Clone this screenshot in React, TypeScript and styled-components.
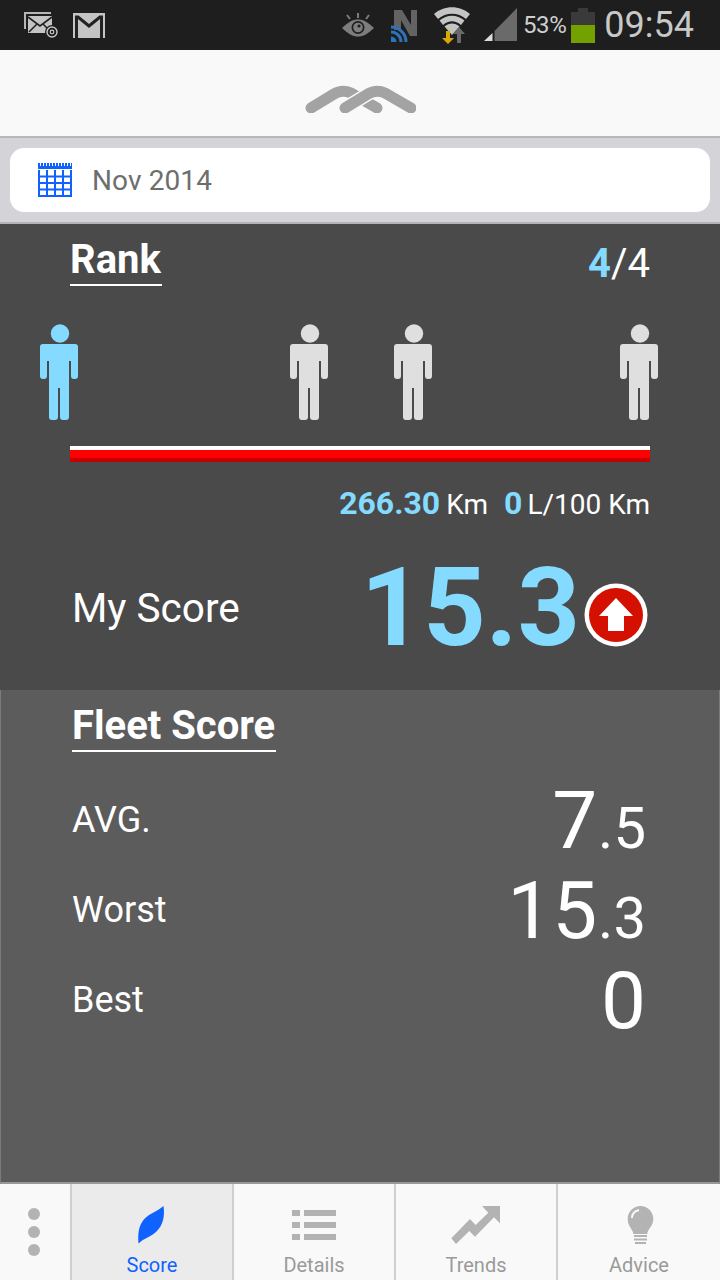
import React from "react";
import styled, { createGlobalStyle } from "styled-components";

const GlobalStyle = createGlobalStyle`
  html, body {
    margin: 0;
    padding: 0;
    background: #4a4a4a;
  }
  * {
    box-sizing: border-box;
  }
`;

const Screen = styled.div`
  width: 720px;
  height: 1280px;
  display: flex;
  flex-direction: column;
  overflow: hidden;
  font-family: Roboto, "Liberation Sans", sans-serif;
`;

const StatusBar = styled.div`
  height: 50px;
  flex: none;
  background: #1e1e1e;
  display: flex;
  align-items: center;
  padding: 0 26px 0 24px;
`;

const StatusLeft = styled.div`
  display: flex;
  align-items: center;
  gap: 13px;
  flex: 1;
`;

const StatusRight = styled.div`
  display: flex;
  align-items: center;
`;

const StatusGlyph = styled.svg<{ $gap?: number }>`
  flex: none;
  margin-right: ${(p) => p.$gap || 0}px;
`;

const BatteryText = styled.span`
  color: #cfcfcf;
  font-size: 24px;
  letter-spacing: -0.4px;
  margin: 0 5px 0 5px;
`;

const Clock = styled.span`
  color: #c8c8c8;
  font-size: 36px;
  margin-left: 9px;
  line-height: 50px;
`;

const Header = styled.div`
  height: 88px;
  flex: none;
  background: #f9f9f9;
  border-bottom: 2px solid #b8b8b8;
  display: flex;
  align-items: center;
  justify-content: center;
`;

const DateStrip = styled.div`
  height: 86px;
  flex: none;
  background: #d3d3d8;
  border-bottom: 2px solid #b5b5b8;
  padding: 10px 10px 0;
`;

const DateCard = styled.div`
  height: 64px;
  background: #fff;
  border-radius: 14px;
  display: flex;
  align-items: center;
  padding-left: 28px;
  gap: 20px;
  color: #6e6e6e;
  font-size: 28px;
  letter-spacing: 0.1px;
`;

const RankPanel = styled.section`
  height: 466px;
  flex: none;
  background: #4a4a4a;
  color: #fff;
  padding: 12px 70px 0;
`;

const TitleRow = styled.div`
  display: flex;
  justify-content: space-between;
  align-items: flex-start;
`;

const Title = styled.h2`
  margin: 0;
  font-size: 40px;
  font-weight: 700;
  line-height: 48px;
  border-bottom: 2px solid #fff;
  height: 50px;
  padding-right: 1px;
`;

const FleetTitle = styled(Title)`
  display: inline-block;
`;

const RankCount = styled.div`
  font-size: 40px;
  line-height: 56px;
`;

const Blue = styled.b`
  color: #84dbff;
  font-weight: 700;
`;

const People = styled.div`
  display: flex;
  margin: 32px -70px 0;
  height: 96px;
`;

const Person = styled.svg<{ $left: number }>`
  width: 38px;
  height: 96px;
  flex: none;
  margin-left: ${(p) => p.$left}px;
`;

const Track = styled.div`
  height: 16px;
  margin-top: 26px;
  background: linear-gradient(#fff 0 4px, #ff0000 4px 12px, #c40000 12px 16px);
`;

const Stats = styled.div`
  display: flex;
  justify-content: flex-end;
  align-items: baseline;
  margin-top: 21px;
  font-size: 28px;
  line-height: 40px;
`;

const StatValue = styled.b<{ $left?: number; $right?: number }>`
  color: #84dbff;
  font-size: 32px;
  font-weight: 700;
  margin: 0 ${(p) => p.$right ?? 6}px 0 ${(p) => p.$left || 0}px;
`;

const ScoreRow = styled.div`
  display: flex;
  align-items: center;
  justify-content: space-between;
  margin: 27px 2px 0 2px;
  height: 112px;
`;

const ScoreLabel = styled.div`
  font-size: 40.5px;
`;

const ScoreValue = styled.div`
  display: flex;
  align-items: center;
  gap: 4px;
`;

const ScoreNumber = styled.span`
  color: #84dbff;
  font-size: 109px;
  font-weight: 700;
  line-height: 112px;
`;

const BadgeIcon = styled.svg`
  flex: none;
  margin-top: 14px;
`;

const FleetPanel = styled.section`
  flex: 1;
  background: #5c5c5c;
  color: #fff;
  border-left: 1px solid #7c7c7c;
  border-right: 1px solid #7c7c7c;
  border-bottom: 2px solid #999;
  padding: 12px 73px 0 71px;
`;

const FleetRows = styled.div`
  margin-top: 24px;
`;

const FleetRow = styled.div`
  display: flex;
  align-items: flex-end;
  justify-content: space-between;
  height: 90px;
`;

const FleetLabel = styled.div`
  font-size: 36px;
  line-height: 40px;
  padding-bottom: 26px;
`;

const FleetValue = styled.div`
  font-size: 80px;
  line-height: 90px;
`;

const Decimal = styled.span`
  font-size: 58px;
  line-height: 0;
  margin-left: 1px;
`;

const Nav = styled.nav`
  height: 96px;
  flex: none;
  display: flex;
  background: #f9f9f9;
`;

const MenuCell = styled.div`
  width: 72px;
  flex: none;
  border-right: 2px solid #cfcfcf;
  display: flex;
  flex-direction: column;
  align-items: center;
  justify-content: center;
  gap: 6px;
  padding-right: 2px;
`;

const Dot = styled.span`
  width: 12px;
  height: 12px;
  border-radius: 50%;
  background: #b3b3b3;
`;

const Tab = styled.div<{ $active?: boolean; $last?: boolean }>`
  width: 162px;
  flex: none;
  border-right: ${(p) => (p.$last ? "none" : "2px solid #cfcfcf")};
  background: ${(p) => (p.$active ? "#ebebeb" : "transparent")};
  color: ${(p) => (p.$active ? "#0f62fe" : "#9a9a9a")};
  display: flex;
  flex-direction: column;
  align-items: center;
  font-size: 20px;
  line-height: 24px;
  padding-top: 20px;
  gap: 9px;
`;

const TabIcon = styled.svg`
  width: 60px;
  height: 40px;
  flex: none;
`;

const PersonFigure = ({ color, left }: { color: string; left: number }) => (
  <Person $left={left} viewBox="0 0 38 96">
    <circle cx="20" cy="9.500" r="9.200" fill={color} />
    <path
      fill={color}
      d="M3 20h32a3 3 0 0 1 3 3v29a3 3 0 0 1-3 3h-1a3 3 0 0 1-3-3V37h-2v56a3 3 0 0 1-3 3h-3a3 3 0 0 1-3-3V64h-2v29a3 3 0 0 1-3 3h-3a3 3 0 0 1-3-3V37H7v15a3 3 0 0 1-3 3H3a3 3 0 0 1-3-3V23a3 3 0 0 1 3-3z"
    />
  </Person>
);

const MailIcon = () => (
  <StatusGlyph width="36" height="28" viewBox="0 0 36 28">
    <path d="M0 1h27v2H2v15H0z" fill="#b5b5b5" />
    <rect x="4" y="5" width="24" height="17" fill="#c4c4c4" />
    <path d="M4 6l12 9 12-9M5 21l8-8M27 21l-8-8" fill="none" stroke="#222" strokeWidth="1.600" />
    <circle cx="28" cy="21" r="7" fill="#1e1e1e" />
    <circle cx="28" cy="21" r="5" fill="none" stroke="#c8c8c8" strokeWidth="1.400" />
    <circle cx="28" cy="21" r="1.800" fill="none" stroke="#c8c8c8" strokeWidth="1.200" />
  </StatusGlyph>
);

const GmailIcon = () => (
  <StatusGlyph width="32" height="25" viewBox="0 0 32 25">
    <rect width="32" height="25" fill="#c4c4c4" />
    <path d="M3.500 25V4h1.500L16 13 27 4h1.500v21" fill="none" stroke="#222" strokeWidth="3" />
  </StatusGlyph>
);

const EyeIcon = () => (
  <StatusGlyph $gap={15} width="34" height="30" viewBox="0 0 34 30">
    <path d="M1 18C7 12 12 9.500 17 9.500S27 12 33 18c-6 6-11 8.500-16 8.500S7 24 1 18z" fill="#7d7d7d" />
    <circle cx="17" cy="17.500" r="6.500" fill="#1e1e1e" />
    <circle cx="17" cy="17.500" r="4.800" fill="#7d7d7d" />
    <circle cx="18" cy="16" r="1.600" fill="#1e1e1e" />
    <path d="M17 3v5M6 5l3 4M28 5l-3 4" stroke="#7d7d7d" strokeWidth="2" />
  </StatusGlyph>
);

const NewsIcon = () => (
  <StatusGlyph $gap={14} width="30" height="38" viewBox="0 0 30 38">
    <path d="M4 4h8l9 15V4h6v26h-7L11 14v10H4z" fill="#636363" />
    <path d="M1 21a15 15 0 0 1 15 15M1 26a10 10 0 0 1 10 10" fill="none" stroke="#2d73ba" strokeWidth="3" />
    <path d="M1 30.500a5.500 5.500 0 0 1 5.500 5.500H1z" fill="#2d73ba" />
  </StatusGlyph>
);

const WifiIcon = () => (
  <StatusGlyph $gap={14} width="36" height="38" viewBox="0 0 36 38">
    <path d="M0 8C10-1 26-1 36 8L32 13C24 6 12 6 4 13z" fill="#c4c4c4" />
    <path d="M5.500 14.500C13 8 23 8 30.500 14.500L27 19C21 14 15 14 9 19z" fill="#c4c4c4" />
    <path d="M10.500 20.500C15 16.500 21 16.500 25.500 20.500L18 29z" fill="#c4c4c4" />
    <path d="M12 25h4v7h4l-6 6-6-6h4z" fill="#d8a700" />
    <path d="M25 21l6 7h-4v9h-4v-9h-4z" fill="#6a6a6a" />
  </StatusGlyph>
);

const SignalIcon = () => (
  <StatusGlyph width="34" height="34" viewBox="0 0 34 34">
    <path d="M8.500 25v8H0z" fill="#dcdcdc" />
    <path d="M33 0v33H10.500V23z" fill="#6a6a6a" />
  </StatusGlyph>
);

const BatteryIcon = () => (
  <StatusGlyph width="24" height="35" viewBox="0 0 24 35">
    <rect x="7" y="0" width="10" height="4" fill="#3a3a3a" />
    <rect x="0" y="4" width="24" height="13" fill="#3a3a3a" />
    <rect x="0" y="17" width="24" height="18" fill="#72a100" />
  </StatusGlyph>
);

const Logo = () => (
  <svg width="112" height="40" viewBox="0 0 112 40" fill="none" stroke="#a3a3a3" strokeWidth="11" strokeLinecap="round" strokeLinejoin="round">
    <path d="M7 35L30 21Q38 16 47 20L73 35" />
    <path d="M41 35L64 21Q72 16 81 20L107 35" stroke="#f9f9f9" strokeWidth="14" strokeLinecap="butt" />
    <path d="M41 35L64 21Q72 16 81 20L107 35" />
  </svg>
);

const CalendarIcon = () => (
  <svg width="34" height="34" viewBox="0 0 34 34" style={{ flex: "none" }}>
    <path d="M0 1.500h34" stroke="#0f62fe" strokeWidth="3" strokeDasharray="2 1" />
    <rect x="0" y="3" width="34" height="3" fill="#0f62fe" />
    <path d="M1 7v26h32V7M1 13.500h32M1 20h32M1 26.500h32M9 7v26M17 7v26M25 7v26" fill="none" stroke="#0f62fe" strokeWidth="2" />
  </svg>
);

const ArrowBadge = () => (
  <BadgeIcon width="64" height="64" viewBox="0 0 64 64">
    <circle cx="32" cy="32" r="31.500" fill="#fff" />
    <circle cx="32" cy="32" r="27" fill="#d41000" />
    <path d="M32 15l17 18H40v15H24V33H15z" fill="#fff" />
  </BadgeIcon>
);

const App = () => {
  return (
    <Screen>
      <GlobalStyle />
      <StatusBar>
        <StatusLeft>
          <MailIcon />
          <GmailIcon />
        </StatusLeft>
        <StatusRight>
          <EyeIcon />
          <NewsIcon />
          <WifiIcon />
          <SignalIcon />
          <BatteryText>53%</BatteryText>
          <BatteryIcon />
          <Clock>09:54</Clock>
        </StatusRight>
      </StatusBar>
      <Header>
        <Logo />
      </Header>
      <DateStrip>
        <DateCard>
          <CalendarIcon />
          Nov 2014
        </DateCard>
      </DateStrip>
      <RankPanel>
        <TitleRow>
          <Title>Rank</Title>
          <RankCount>
            <Blue>4</Blue>/4
          </RankCount>
        </TitleRow>
        <People>
          <PersonFigure color="#84dbff" left={40} />
          <PersonFigure color="#dfdfdf" left={212} />
          <PersonFigure color="#dfdfdf" left={66} />
          <PersonFigure color="#dfdfdf" left={188} />
        </People>
        <Track />
        <Stats>
          <StatValue>266.30</StatValue>
          Km
          <StatValue $left={16} $right={5}>0</StatValue>
          L/100 Km
        </Stats>
        <ScoreRow>
          <ScoreLabel>My Score</ScoreLabel>
          <ScoreValue>
            <ScoreNumber>15.3</ScoreNumber>
            <ArrowBadge />
          </ScoreValue>
        </ScoreRow>
      </RankPanel>
      <FleetPanel>
        <FleetTitle>Fleet Score</FleetTitle>
        <FleetRows>
          <FleetRow>
            <FleetLabel>AVG.</FleetLabel>
            <FleetValue>
              7<Decimal>.5</Decimal>
            </FleetValue>
          </FleetRow>
          <FleetRow>
            <FleetLabel>Worst</FleetLabel>
            <FleetValue>
              15<Decimal>.3</Decimal>
            </FleetValue>
          </FleetRow>
          <FleetRow>
            <FleetLabel>Best</FleetLabel>
            <FleetValue>0</FleetValue>
          </FleetRow>
        </FleetRows>
      </FleetPanel>
      <Nav>
        <MenuCell>
          <Dot />
          <Dot />
          <Dot />
        </MenuCell>
        <Tab $active>
          <TabIcon viewBox="0 0 60 40">
            <path d="M41.500 2C35 8 24 10 19.500 19C16 25 16 33 16.500 39.500C22 34 29 33 35 27C41 21 43 12 41.500 2z" fill="#0f62fe" />
          </TabIcon>
          Score
        </Tab>
        <Tab>
          <TabIcon viewBox="0 0 60 40">
            <path d="M8 6h8v6H8zM20 6h32v6H20zM8 18h8v6H8zM20 18h32v6H20zM8 30h8v6H8zM20 30h32v6H20z" fill="#b3b3b3" />
          </TabIcon>
          Details
        </Tab>
        <Tab>
          <TabIcon viewBox="0 0 60 40">
            <path d="M5.300 34.300L24 15l5.700 6L42.300 8.700L36 2H54V19.300L48 13.300L29 32.700L23.300 27L10 40z" fill="#b3b3b3" />
          </TabIcon>
          Trends
        </Tab>
        <Tab $last>
          <TabIcon viewBox="0 0 60 40">
            <path d="M31.500 2c7 0 12.800 5.800 12.800 13 0 6-4 9-5.500 12.500-.4 1-.5 1.500-.5 2.500H24.200c0-1-.1-1.500-.5-2.500C22.200 24 18.700 21 18.700 15c0-7.200 5.800-13 12.800-13z" fill="#b3b3b3" />
            <path d="M23 14c0-4 3-7 7-8" fill="none" stroke="#f9f9f9" strokeWidth="2" />
            <path d="M25 31h13v2H25zM25 34.500h13v2H25zM26 38h11v2H26z" fill="#b3b3b3" />
          </TabIcon>
          Advice
        </Tab>
      </Nav>
    </Screen>
  );
};

export default App;
